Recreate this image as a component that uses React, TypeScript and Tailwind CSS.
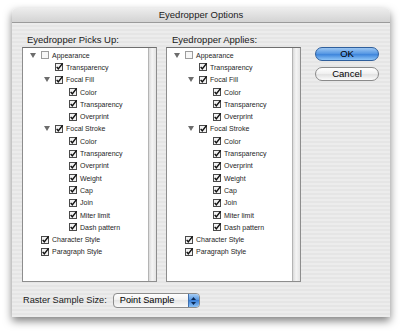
import React from 'react';

type Row = { level: number; label: string; checked: boolean; open?: boolean };

const rows: Row[] = [
  { level: 0, label: 'Appearance', checked: false, open: true },
  { level: 1, label: 'Transparency', checked: true },
  { level: 1, label: 'Focal Fill', checked: true, open: true },
  { level: 2, label: 'Color', checked: true },
  { level: 2, label: 'Transparency', checked: true },
  { level: 2, label: 'Overprint', checked: true },
  { level: 1, label: 'Focal Stroke', checked: true, open: true },
  { level: 2, label: 'Color', checked: true },
  { level: 2, label: 'Transparency', checked: true },
  { level: 2, label: 'Overprint', checked: true },
  { level: 2, label: 'Weight', checked: true },
  { level: 2, label: 'Cap', checked: true },
  { level: 2, label: 'Join', checked: true },
  { level: 2, label: 'Miter limit', checked: true },
  { level: 2, label: 'Dash pattern', checked: true },
  { level: 0, label: 'Character Style', checked: true },
  { level: 0, label: 'Paragraph Style', checked: true },
];

// spacer before the disclosure slot, per tree level
const indent = ['w-[7px]', 'w-[21px]', 'w-[35px]'];

const CheckBox: React.FC<{ checked: boolean }> = ({ checked }) => (
  <svg width="8" height="8" viewBox="0 0 8 8" className="shrink-0 overflow-visible">
    <rect
      x="0.5"
      y="0.5"
      width="7"
      height="7"
      fill={checked ? '#f2f2f2' : '#f7f7f7'}
      stroke={checked ? '#4a4a4a' : '#9c9c9c'}
    />
    {checked && <path d="M1.7 3.9 L3.3 5.9 L7.6 0.4" fill="none" stroke="#111" strokeWidth="1.5" />}
  </svg>
);

const Triangle = () => (
  <svg width="6" height="5" viewBox="0 0 6 5">
    <polygon points="0,0 6,0 3,5" fill="#6d6d6d" />
  </svg>
);

const TreeList: React.FC = () => (
  <div className="flex h-[235px] w-[135px] border border-[#8d8d8d] border-t-[#6f6f6f] bg-white">
    <div className="flex flex-1 flex-col pt-[1px]">
      {rows.map((r, i) => (
        <div key={i} className="flex h-[12.3px] items-center">
          <div className={indent[r.level]} />
          <div className="flex w-[11px] shrink-0 items-center">{r.open && <Triangle />}</div>
          <CheckBox checked={r.checked} />
          <span className="ml-[3px] text-[7px] leading-none text-[#1e1e1e]">{r.label}</span>
        </div>
      ))}
    </div>
    {/* scroll track */}
    <div className="w-[8px] border-l border-[#b4b4b4] bg-[linear-gradient(to_right,#dadada,#f5f5f5_45%,#e4e4e4)]" />
  </div>
);

export default function App() {
  return (
    <div className="h-[332px] w-[400px] bg-white pl-[12px] pt-[8px] font-['Liberation_Sans',Arial,sans-serif]">
      <div className="flex h-[309px] w-[378px] flex-col rounded-t-[5px] shadow-[0_4px_9px_rgba(0,0,0,0.5)]">
        {/* title bar */}
        <div className="flex h-[15px] items-center justify-center rounded-t-[5px] border-b border-[#9a9a9a] bg-[linear-gradient(to_bottom,#ededed,#d3d3d3)] text-[9.5px] text-[#222]">
          Eyedropper Options
        </div>

        <div className="flex flex-1 flex-col bg-[repeating-linear-gradient(to_bottom,#ececec_0px,#ececec_2px,#e5e5e5_2px,#e5e5e5_4px)] px-[10px] pt-[11px]">
          <div className="flex">
            <div className="flex flex-col">
              <div className="pl-[5px] text-[9.5px] leading-[12px] text-[#1a1a1a]">Eyedropper Picks Up:</div>
              <div className="mt-[1px]">
                <TreeList />
              </div>
            </div>
            <div className="ml-[9px] flex flex-col">
              <div className="pl-[6px] text-[9.5px] leading-[12px] text-[#1a1a1a]">Eyedropper Applies:</div>
              <div className="mt-[1px]">
                <TreeList />
              </div>
            </div>
            <div className="ml-[14px] flex w-[64px] flex-col gap-[6px] pt-[13px]">
              <button className="flex h-[14px] items-center justify-center rounded-full border border-[#2f5f9c] bg-[linear-gradient(to_bottom,#9cc6f2,#5a9ae4_45%,#3f86dc_55%,#8fc5f7)] text-[9.5px] text-black">
                OK
              </button>
              <button className="flex h-[14px] items-center justify-center rounded-full border border-[#8a8a8a] bg-[linear-gradient(to_bottom,#ffffff,#f1f1f1_45%,#e2e2e2_55%,#fbfbfb)] text-[9.5px] text-black">
                Cancel
              </button>
            </div>
          </div>

          <div className="mt-[11px] flex h-[15px] items-center gap-[6px] pl-[1px]">
            <span className="text-[9.2px] text-[#1a1a1a]">Raster Sample Size:</span>
            <div className="flex h-[15px] w-[87px] items-stretch overflow-hidden rounded-[4px] border border-[#8c8c8c] bg-[linear-gradient(to_bottom,#ffffff,#f0f0f0_50%,#e6e6e6_50%,#fafafa)]">
              <span className="flex flex-1 items-center pl-[6px] text-[9.2px] text-black">Point Sample</span>
              <div className="flex w-[11px] flex-col items-center justify-center gap-[2px] border-l border-[#3f6fae] bg-[linear-gradient(to_bottom,#a6cdf5,#4f92e0_50%,#3a80d8_50%,#8cc2f5)]">
                <svg width="5" height="3" viewBox="0 0 5 3">
                  <polygon points="2.5,0 5,3 0,3" fill="#0c2a55" />
                </svg>
                <svg width="5" height="3" viewBox="0 0 5 3">
                  <polygon points="0,0 5,0 2.5,3" fill="#0c2a55" />
                </svg>
              </div>
            </div>
          </div>
        </div>
      </div>
    </div>
  );
}
